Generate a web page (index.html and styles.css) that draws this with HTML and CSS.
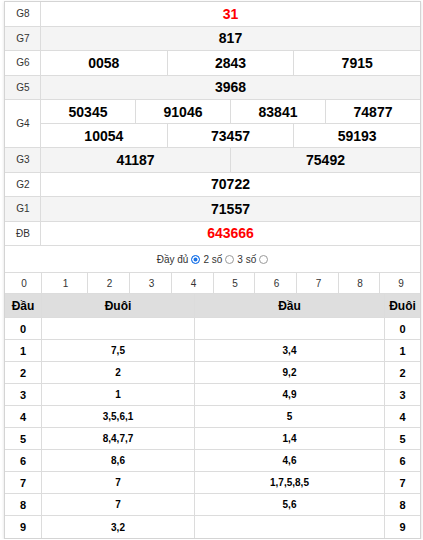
FILE: index.html
```html
<!DOCTYPE html>
<html lang="vi">
<head>
<meta charset="utf-8">
<title>Kết quả</title>
<link rel="stylesheet" href="styles.css">
</head>
<body>
<div class="page">
  <div class="kq">
    <div class="row"><div class="lbl">G8</div><div class="vals"><div class="v red">31</div></div></div>
    <div class="row alt"><div class="lbl">G7</div><div class="vals"><div class="v">817</div></div></div>
    <div class="row"><div class="lbl">G6</div><div class="vals"><div class="v">0058</div><div class="v">2843</div><div class="v">7915</div></div></div>
    <div class="row alt"><div class="lbl">G5</div><div class="vals"><div class="v">3968</div></div></div>
    <div class="row g4"><div class="lbl">G4</div>
      <div class="vals col">
        <div class="sub"><div class="v">50345</div><div class="v">91046</div><div class="v">83841</div><div class="v">74877</div></div>
        <div class="sub"><div class="v">10054</div><div class="v">73457</div><div class="v">59193</div></div>
      </div>
    </div>
    <div class="row alt"><div class="lbl">G3</div><div class="vals"><div class="v">41187</div><div class="v">75492</div></div></div>
    <div class="row"><div class="lbl">G2</div><div class="vals"><div class="v">70722</div></div></div>
    <div class="row alt"><div class="lbl">G1</div><div class="vals"><div class="v">71557</div></div></div>
    <div class="row"><div class="lbl">ĐB</div><div class="vals"><div class="v red">643666</div></div></div>
  </div>

  <div class="opts">
    <span>Đầy đủ</span><span class="radio on"></span><span>2 số</span><span class="radio"></span><span>3 số</span><span class="radio"></span>
  </div>

  <div class="digits">
    <span class="d w37">0</span><span class="d w46">1</span><span class="d w42">2</span><span class="d w42">3</span><span class="d w42">4</span><span class="d w41">5</span><span class="d w42">6</span><span class="d w42">7</span><span class="d w41">8</span><span class="d last">9</span>
  </div>

  <div class="loto">
    <div class="lr head"><div class="c1">Đầu</div><div class="c2">Đuôi</div><div class="c3">Đầu</div><div class="c4">Đuôi</div></div>
    <div class="lr"><div class="c1">0</div><div class="c2"></div><div class="c3"></div><div class="c4">0</div></div>
    <div class="lr"><div class="c1">1</div><div class="c2">7,5</div><div class="c3">3,4</div><div class="c4">1</div></div>
    <div class="lr"><div class="c1">2</div><div class="c2">2</div><div class="c3">9,2</div><div class="c4">2</div></div>
    <div class="lr"><div class="c1">3</div><div class="c2">1</div><div class="c3">4,9</div><div class="c4">3</div></div>
    <div class="lr"><div class="c1">4</div><div class="c2">3,5,6,1</div><div class="c3">5</div><div class="c4">4</div></div>
    <div class="lr"><div class="c1">5</div><div class="c2">8,4,7,7</div><div class="c3">1,4</div><div class="c4">5</div></div>
    <div class="lr"><div class="c1">6</div><div class="c2">8,6</div><div class="c3">4,6</div><div class="c4">6</div></div>
    <div class="lr"><div class="c1">7</div><div class="c2">7</div><div class="c3">1,7,5,8,5</div><div class="c4">7</div></div>
    <div class="lr"><div class="c1">8</div><div class="c2">7</div><div class="c3">5,6</div><div class="c4">8</div></div>
    <div class="lr last"><div class="c1">9</div><div class="c2">3,2</div><div class="c3"></div><div class="c4">9</div></div>
  </div>
</div>
</body>
</html>
```

FILE: styles.css
```css
* { box-sizing: border-box; }
body {
  margin: 0;
  background: #fff;
  font-family: Arial, "Liberation Sans", sans-serif;
  color: #000;
}
.page {
  margin: 1px 0 0 4px;
  width: 417px;
  border: 1px solid #d4d4d4;
  box-shadow: 0 1px 3px rgba(0, 0, 0, 0.13);
}
.row {
  display: flex;
  height: 24.5px;
  border-bottom: 1px solid #dcdcdc;
}
.row.alt { background: #f4f4f4; }
.row.g4 { height: 48px; }
.lbl {
  width: 36px;
  flex: none;
  border-right: 1px solid #dcdcdc;
  display: flex;
  align-items: center;
  justify-content: center;
  font-size: 10px;
  color: #333;
  padding-left: 1px;
}
.vals { flex: 1; display: flex; }
.vals.col { flex-direction: column; }
.sub { flex: 1; display: flex; }
.sub:first-child { border-bottom: 1px solid #dcdcdc; }
.v {
  flex: 1;
  display: flex;
  align-items: center;
  justify-content: center;
  font-weight: bold;
  font-size: 14px;
  border-left: 1px solid #dcdcdc;
}
.v:first-child { border-left: 0; }
.v.red { color: #f00; }

.opts {
  height: 27px;
  border-bottom: 1px solid #dcdcdc;
  display: flex;
  align-items: center;
  justify-content: center;
  gap: 3px;
  font-size: 10px;
  color: #333;
}
.radio {
  display: inline-block;
  width: 9px;
  height: 9px;
  border: 1px solid #9a9a9a;
  border-radius: 50%;
  background: #fff;
}
.radio.on {
  border-color: #1a73e8;
  background: #1a73e8;
  box-shadow: inset 0 0 0 1.5px #fff;
}

.digits {
  display: flex;
  height: 21px;
  border-bottom: 1px solid #dcdcdc;
}
.d {
  display: flex;
  align-items: center;
  justify-content: center;
  font-size: 10px;
  color: #333;
  border-right: 1px solid #dcdcdc;
  flex: none;
  padding-left: 2px;
}
.d.w37 { width: 37px; }
.d.w46 { width: 46px; }
.d.w42 { width: 42px; }
.d.w41 { width: 41px; }
.d.last { flex: 1; border-right: 0; }

.lr {
  display: grid;
  grid-template-columns: 37px 153px 190px 1fr;
  height: 22px;
  border-bottom: 1px solid #dcdcdc;
}
.lr.last { border-bottom: 0; }
.lr.head {
  height: 24px;
  background: #dedede;
  font-size: 12px;
}
.lr > div {
  display: flex;
  align-items: center;
  justify-content: center;
  font-weight: bold;
  border-right: 1px solid #dcdcdc;
}
.lr > .c4 { border-right: 0; }
.lr .c1, .lr .c4 { font-size: 11px; }
.lr .c2, .lr .c3 { font-size: 10px; }
.lr.head > div { font-size: 12px; }
```
